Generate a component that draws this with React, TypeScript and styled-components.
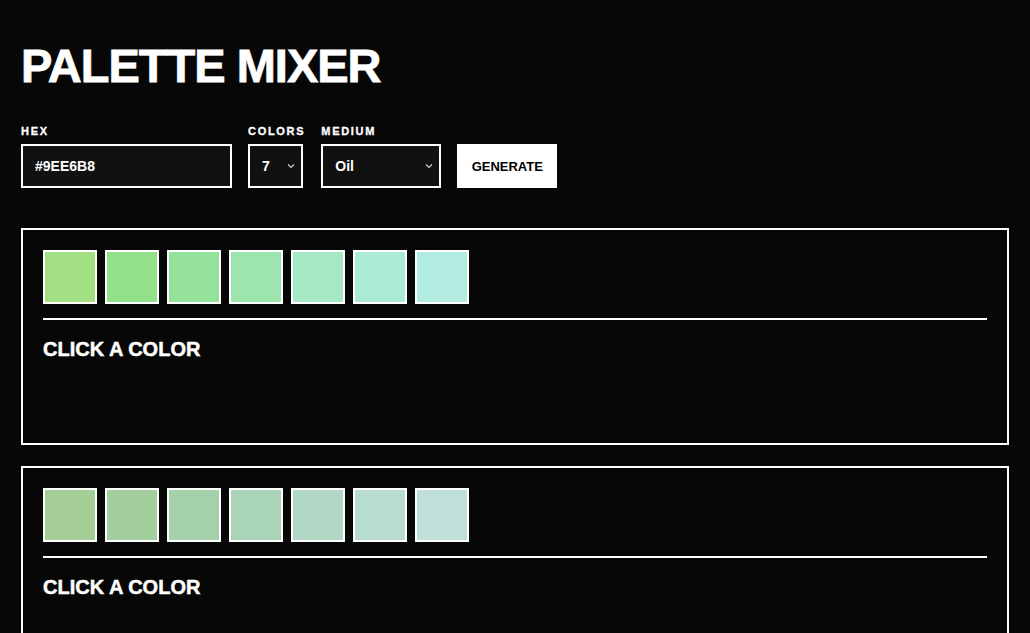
import React from "react";
import styled, {createGlobalStyle} from "styled-components";

// page global style
const GlobalStyle = createGlobalStyle`
  html, body {
    margin: 0;
    padding: 0;
    background: #070707;
  }
  body {
    font-family: "Liberation Sans", Arial, sans-serif;
    color: #fff;
  }
`;

const Page = styled.div`
  padding: 42px 21px 40px;
  background: #070707;
  min-height: 633px;
  box-sizing: border-box;
`;

const Title = styled.h1`
  margin: 0 0 36px;
  font-size: 47px;
  line-height: 1;
  font-weight: 900;
  letter-spacing: -1px;
  text-transform: uppercase;
  -webkit-text-stroke: 0.8px #fff;
`;

const Toolbar = styled.div`
  display: flex;
  align-items: flex-end;
  gap: 16px;
  margin-bottom: 40px;
`;

const Field = styled.label`
  display: flex;
  flex-direction: column;
  align-items: flex-start;
  gap: 6px;
`;

const Label = styled.span`
  font-size: 11px;
  line-height: 13px;
  font-weight: 700;
  letter-spacing: 1.7px;
  -webkit-text-stroke: 0.3px #fff;
`;

const controlBase = `
  box-sizing: border-box;
  height: 44px;
  border: 2px solid #fff;
  background: #111;
  color: #fff;
  font-family: "Liberation Sans", Arial, sans-serif;
  font-size: 14px;
  font-weight: 700;
  padding: 0 12px;
  outline: none;
  border-radius: 0;
`;

const HexInput = styled.input`
  ${controlBase};
  width: 211px;
`;

const SelectWrap = styled.div<{$w: number}>`
  position: relative;
  width: ${(p) => p.$w}px;
`;

const Select = styled.select`
  ${controlBase};
  width: 100%;
  appearance: none;
  -webkit-appearance: none;
`;

const Chevron = styled.svg`
  position: absolute;
  right: 8px;
  top: 19px;
  width: 8px;
  height: 6px;
  pointer-events: none;
`;

const GenerateButton = styled.button`
  box-sizing: border-box;
  height: 44px;
  width: 100px;
  border: none;
  background: #fff;
  color: #000;
  font-family: "Liberation Sans", Arial, sans-serif;
  font-size: 13px;
  font-weight: 700;
  cursor: pointer;
  border-radius: 0;
`;

const Panel = styled.section`
  border: 2px solid #fff;
  padding: 20px;
  margin-bottom: 21px;
`;

const SwatchRow = styled.div`
  display: flex;
  gap: 8px;
`;

const Swatch = styled.button<{$c: string}>`
  box-sizing: border-box;
  width: 54px;
  height: 54px;
  border: 2px solid #fff;
  background: ${(p) => p.$c};
  padding: 0;
  border-radius: 0;
  cursor: pointer;
`;

const Divider = styled.hr`
  border: none;
  height: 2px;
  background: #fff;
  margin: 14px 0 17px;
`;

const Info = styled.div`
  min-height: 86px;
`;

const InfoTitle = styled.h2`
  margin: 0;
  font-size: 20px;
  line-height: 24px;
  font-weight: 900;
  -webkit-text-stroke: 0.5px #fff;
`;

const palettes = [
  ["#A2E083", "#93E08A", "#94E29C", "#9CE5AF", "#A5E8C4", "#ABEBD3", "#B2EBE0"],
  ["#A5CD96", "#A2CF9D", "#A4D1AA", "#AAD5B8", "#B1D8C5", "#B8DDCE", "#BFDFD8"],
];

function ChevronIcon() {
  return (
    <Chevron viewBox="0 0 8 6">
      <path d="M1 1.5 L4 4.5 L7 1.5" fill="none" stroke="#ccc" strokeWidth="1.2"/>
    </Chevron>
  );
}

export default function App() {
  return (
    <Page>
      <GlobalStyle/>
      <Title>Palette Mixer</Title>
      <Toolbar>
        <Field>
          <Label>HEX</Label>
          <HexInput defaultValue="#9EE6B8"/>
        </Field>
        <Field>
          <Label>COLORS</Label>
          <SelectWrap $w={55}>
            <Select defaultValue="7">
              {[3, 4, 5, 6, 7, 8, 9].map((n) => (
                <option key={n} value={n}>{n}</option>
              ))}
            </Select>
            <ChevronIcon/>
          </SelectWrap>
        </Field>
        <Field>
          <Label>MEDIUM</Label>
          <SelectWrap $w={120}>
            <Select defaultValue="Oil">
              <option>Oil</option>
              <option>Acrylic</option>
              <option>Watercolor</option>
            </Select>
            <ChevronIcon/>
          </SelectWrap>
        </Field>
        <GenerateButton>GENERATE</GenerateButton>
      </Toolbar>

      {palettes.map((pal, i) => (
        <Panel key={i}>
          <SwatchRow>
            {pal.map((c) => (
              <Swatch key={c} $c={c} title={c}/>
            ))}
          </SwatchRow>
          <Divider/>
          <Info>
            <InfoTitle>CLICK A COLOR</InfoTitle>
          </Info>
        </Panel>
      ))}
    </Page>
  );
}
